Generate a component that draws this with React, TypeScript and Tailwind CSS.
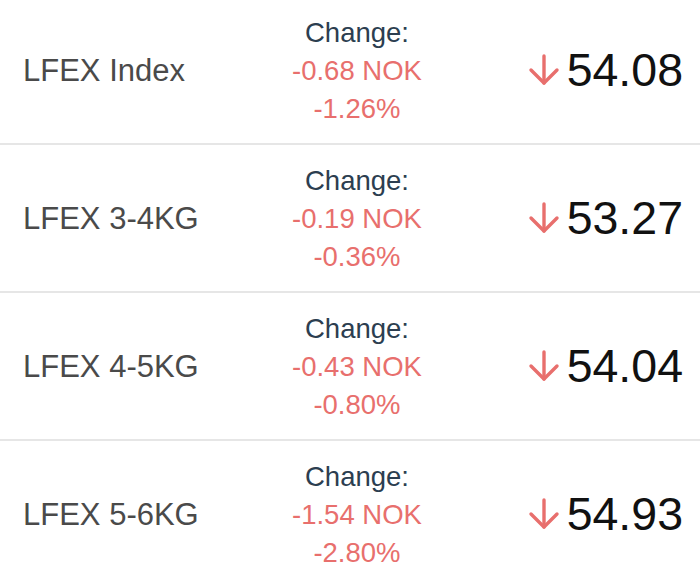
const rows = [
  { name: "LFEX Index", abs: "-0.68 NOK", pct: "-1.26%", price: "54.08" },
  { name: "LFEX 3-4KG", abs: "-0.19 NOK", pct: "-0.36%", price: "53.27" },
  { name: "LFEX 4-5KG", abs: "-0.43 NOK", pct: "-0.80%", price: "54.04" },
  { name: "LFEX 5-6KG", abs: "-1.54 NOK", pct: "-2.80%", price: "54.93" },
];

function DownArrow() {
  return (
    <svg width="32" height="32" viewBox="0 0 32 32" className="flex-shrink-0" fill="none" stroke="#e86f6d" strokeWidth="3.4" strokeLinecap="round" strokeLinejoin="round">
      <path d="M16 2v27" />
      <path d="M3 16l13 13 13-13" />
    </svg>
  );
}

export default function App() {
  return (
    <div className="w-[700px] h-[585px] overflow-hidden bg-white" style={{ fontFamily: '"Liberation Sans", Arial, sans-serif' }}>
      <div className="-mt-[3px]">
        {rows.map((r) => (
          <div key={r.name} className="flex items-center h-[148px] border-b-2 border-[#e6e6e6]">
            <div className="w-[240px] pl-[23px] text-[31px] text-[#4a4a4a] leading-none">{r.name}</div>
            <div className="w-[234px] flex flex-col items-center text-[27.5px] leading-[38px] pt-[1px]">
              <span className="text-[#2c3e50]">Change:</span>
              <span className="text-[#e86f6d]">{r.abs}</span>
              <span className="text-[#e86f6d]">{r.pct}</span>
            </div>
            <div className="flex-1 flex items-center justify-end gap-[7px] pr-[17px]">
              <DownArrow />
              <span className="text-[46.5px] text-[#111] leading-none">{r.price}</span>
            </div>
          </div>
        ))}
      </div>
    </div>
  );
}
